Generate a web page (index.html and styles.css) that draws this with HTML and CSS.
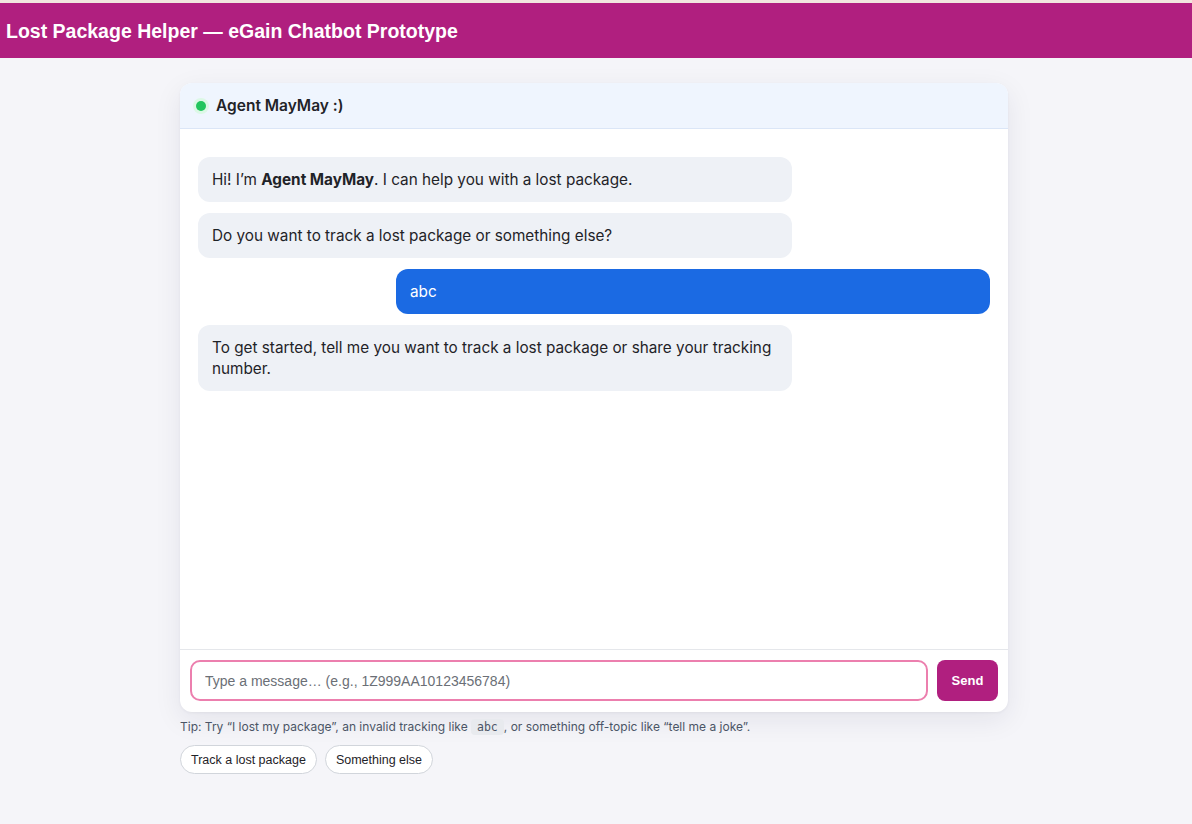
FILE: index.html
```html
<!DOCTYPE html>
<html lang="en">
<head>
<meta charset="utf-8">
<title>Lost Package Helper — eGain Chatbot Prototype</title>
<link rel="stylesheet" href="styles.css">
</head>
<body>
<div class="topline"></div>
<header class="appbar">Lost Package Helper — eGain Chatbot Prototype</header>
<main class="wrap">
  <section class="card">
    <div class="card-head">
      <span class="dot"></span>
      <span class="agent">Agent MayMay :)</span>
    </div>
    <div class="messages">
      <div class="msg bot">Hi! I’m <b>Agent MayMay</b>. I can help you with a lost package.</div>
      <div class="msg bot">Do you want to track a lost package or something else?</div>
      <div class="msg user">abc</div>
      <div class="msg bot">To get started, tell me you want to track a lost package or share your tracking number.</div>
    </div>
    <form class="composer">
      <input class="field" type="text" placeholder="Type a message… (e.g., 1Z999AA10123456784)">
      <button class="send" type="button">Send</button>
    </form>
  </section>
  <p class="tip">Tip: Try “I lost my package”, an invalid tracking like <code>abc</code>, or something off-topic like “tell me a joke”.</p>
  <div class="chips">
    <button class="chip" type="button">Track a lost package</button>
    <button class="chip" type="button">Something else</button>
  </div>
</main>
</body>
</html>
```
FILE: styles.css
```css
* { box-sizing: border-box; }
html, body { margin: 0; padding: 0; }
body {
  background: #f5f5f9;
  font-family: Inter, "Noto Sans", sans-serif;
  color: #1f2328;
  height: 824px;
  overflow: hidden;
}
.topline { height: 3px; background: #f1e6de; }
.appbar {
  height: 55px;
  background: #b01f7f;
  color: #fff;
  font-family: "Liberation Sans", Arial, sans-serif;
  font-weight: 700;
  font-size: 19.5px;
  display: flex;
  align-items: center;
  padding-left: 6px;
  padding-top: 2px;
}
.wrap {
  width: 828px;
  margin: 25px 0 0 180px;
}
.card {
  background: #fff;
  border-radius: 12px;
  overflow: hidden;
  box-shadow: 0 8px 28px rgba(30, 30, 60, 0.08), 0 1px 3px rgba(30, 30, 60, 0.05);
  height: 629px;
  display: flex;
  flex-direction: column;
}
.card-head {
  height: 46px;
  background: #eff5fe;
  border-bottom: 1px solid #dbe6f7;
  display: flex;
  align-items: center;
  padding-left: 16px;
  gap: 10px;
}
.dot {
  width: 10px; height: 10px;
  border-radius: 50%;
  background: #22c55e;
  box-shadow: 0 0 0 3px #dcf8e6;
}
.agent { font-weight: 600; font-size: 15.5px; color: #1f2328; }
.messages {
  flex: 1;
  padding: 28px 18px 18px;
  display: flex;
  flex-direction: column;
  gap: 11px;
}
.msg {
  width: 75%;
  padding: 12px 14px;
  border-radius: 12px;
  font-size: 15.3px;
  line-height: 21px;
}
.msg.bot { background: #eef1f6; color: #1f2328; align-self: flex-start; }
.msg.bot b { font-weight: 700; }
.msg.user { background: #1b6ae3; color: #fff; align-self: flex-end; }
.composer {
  margin: 0;
  border-top: 1px solid #e5e7eb;
  padding: 10px 10px 11px;
  display: flex;
  gap: 9px;
}
.field {
  flex: 1;
  height: 41px;
  border: 2px solid #ec7fae;
  border-radius: 10px;
  padding: 0 13px;
  font-family: "Liberation Sans", Arial, sans-serif;
  font-size: 14px;
  color: #1f2328;
  outline: none;
}
.field::placeholder { color: #6b6f76; }
.send {
  width: 61px;
  height: 41px;
  border: 0;
  border-radius: 8px;
  background: #b01f7f;
  color: #fff;
  font-family: "Liberation Sans", Arial, sans-serif;
  font-weight: 700;
  font-size: 13px;
}
.tip {
  margin: 6px 0 0;
  font-family: Inter, "Liberation Sans", sans-serif;
  font-size: 12px;
  color: #4b5566;
  line-height: 18px;
}
.tip code {
  font-family: "DejaVu Sans Mono", monospace;
  font-size: 11.5px;
  background: #e8eaee;
  border-radius: 4px;
  padding: 1px 6px;
  color: #4b5566;
}
.chips {
  margin-top: 9px;
  display: flex;
  gap: 8px;
}
.chip {
  height: 29px;
  padding: 0 10px;
  border: 1px solid #d1d5db;
  background: #fff;
  border-radius: 15px;
  font-family: "Liberation Sans", Arial, sans-serif;
  font-size: 12.5px;
  color: #1f2328;
}
```
